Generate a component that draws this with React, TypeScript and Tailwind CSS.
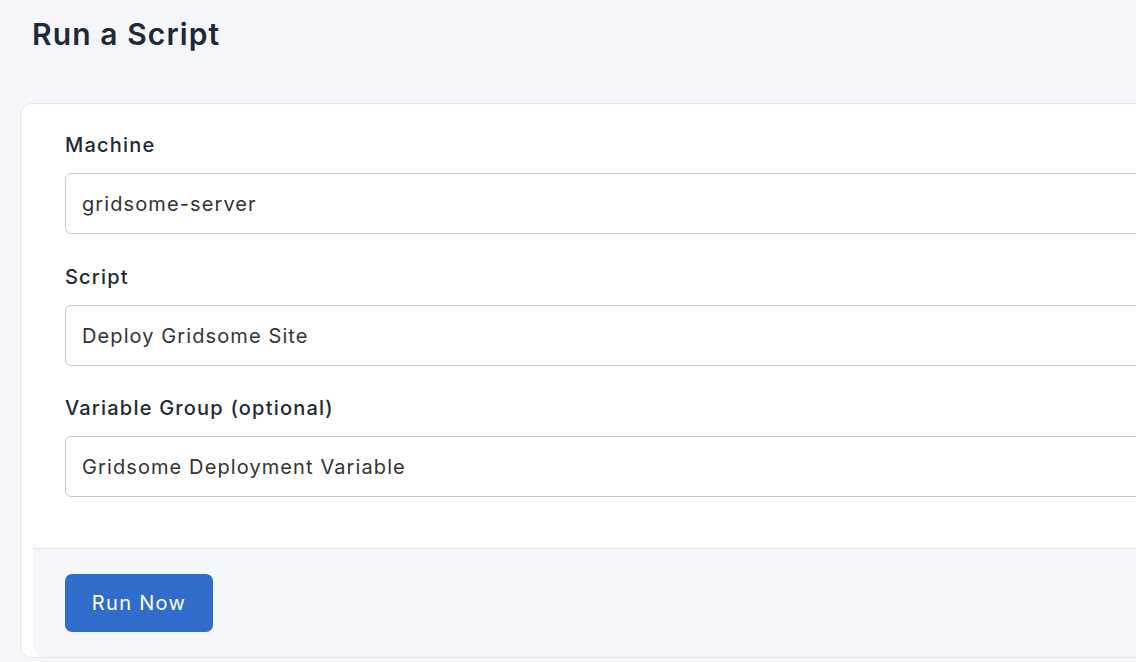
import React from "react";

const font = { fontFamily: "Inter, 'Noto Sans', sans-serif" };

function Field({ label, value, className }: { label: string; value: string; className?: string }) {
  return (
    <div className={"flex flex-col " + (className ?? "")}>
      <label className="text-[20px] leading-[28px] font-medium tracking-[1.2px] text-[#1e2939]">{label}</label>
      <div className="mt-[14px] h-[61px] flex items-center rounded-[6px] border border-[#c9c9c9] bg-white pl-[16px] text-[20px] tracking-[1.1px] text-[#333333]">
        {value}
      </div>
    </div>
  );
}

export default function App() {
  return (
    <div className="min-h-[662px] w-[1136px] overflow-hidden bg-[#f5f6fa]" style={font}>
      <div className="pl-[32px] pt-[16px]">
        <h1 className="text-[30px] leading-[36px] font-semibold tracking-[1.1px] text-[#1e2939]">Run a Script</h1>
      </div>
      <div className="mt-[51px] ml-[20px] w-[1200px] rounded-l-[12px] border border-[#e4e6eb] bg-white pl-[12px]">
        <div className="flex flex-col pl-[32px] pt-[27px] pb-[51px] pr-[40px]">
          <Field label="Machine" value="gridsome-server" />
          <Field label="Script" value="Deploy Gridsome Site" className="mt-[29px]" />
          <Field label="Variable Group (optional)" value="Gridsome Deployment Variable" className="mt-[28px]" />
        </div>
        <div className="rounded-bl-[12px] border-t border-[#dfe2ea] bg-[#f5f6fa] pl-[32px] pt-[25px] pb-[25px]">
          <button className="h-[58px] w-[148px] rounded-[7px] bg-[#306ccc] text-[20px] tracking-[1.3px] text-white">Run Now</button>
        </div>
      </div>
    </div>
  );
}
